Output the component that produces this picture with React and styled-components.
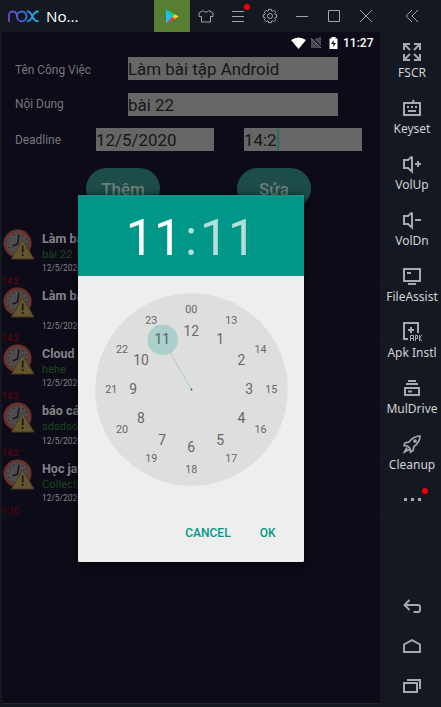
import React from "react";
import styled, { createGlobalStyle } from "styled-components";

const Global = createGlobalStyle`
  * { box-sizing: border-box; }
  body { margin: 0; background: #131821; overflow: hidden; }
  button { border: 0; padding: 0; margin: 0; background: none; font: inherit; color: inherit; }
`;

const Window = styled.div`
  display: grid;
  grid-template-columns: 380px 61px;
  grid-template-rows: 32px 675px;
  width: 441px;
  height: 707px;
  background: #131821;
  font-family: Roboto, sans-serif;
`;

const TitleBar = styled.header`
  grid-column: 1 / 3;
  display: flex;
  align-items: center;
  height: 32px;
  padding-left: 8px;
`;

const AppTitle = styled.div`
  flex: none;
  width: 115px;
  padding-left: 7px;
  font: 15.2px/32px "Open Sans", "Noto Sans", sans-serif;
  color: #fff;
`;

const BarButton = styled.button`
  position: relative;
  display: grid;
  place-items: center;
  flex: none;
  width: ${(p) => p.$w || 32}px;
  height: 32px;
  background: ${(p) => (p.$active ? "#587e33" : "transparent")};
`;

const RedDot = styled.span`
  position: absolute;
  width: 6px;
  height: 6px;
  border-radius: 50%;
  background: #f90000;
  top: ${(p) => p.$top}px;
  left: ${(p) => p.$left}px;
`;

const Phone = styled.main`
  position: relative;
  margin-left: 2px;
  width: 378px;
  height: 672px;
  background: #0c0b17;
  border-bottom: 1px solid #29242b;
  overflow: hidden;
`;

const StatusBar = styled.div`
  display: flex;
  align-items: center;
  justify-content: flex-end;
  height: 22px;
  padding-right: 5px;
  font-size: 12px;
  font-weight: 500;
  color: #fff;
  svg { display: block; }
`;

const Clock = styled.span`
  width: 32px;
  margin-left: 5px;
  white-space: nowrap;
`;

const Form = styled.div`
  padding: 3px 0 0 13px;
  display: grid;
  row-gap: 12.7px;
`;

const FormRow = styled.label`
  display: flex;
  height: 23px;
  align-items: center;
`;

const Label = styled.span`
  width: ${(p) => p.$w}px;
  font-size: 11.9px;
  color: #77767b;
  white-space: nowrap;
  padding-top: ${(p) => p.$drop ?? 2}px;
`;

const Field = styled.span`
  display: flex;
  align-items: center;
  width: ${(p) => p.$w}px;
  margin-right: 30px;
  height: 23px;
  padding-top: 1px;
  background: #666;
  color: #161616;
  font-size: 16.9px;
  white-space: nowrap;
`;

const Caret = styled.i`
  flex: none;
  width: 2px;
  height: 22px;
  margin-top: -1px;
  background: #286d64;
`;

const Buttons = styled.div`
  display: flex;
  gap: 77px;
  padding: 17px 0 0 84px;
`;

const Pill = styled.button`
  width: 74px;
  height: 41px;
  border-radius: 21px;
  background: #1d4d49;
  color: #6f7d79;
  font-size: 17px;
  font-weight: 500;
`;

const List = styled.ul`
  list-style: none;
  margin: 19px 0 0;
  padding: 0;
`;

const Task = styled.li`
  display: grid;
  grid-template-columns: 40px 1fr;
  height: 57.5px;
  border-bottom: 1px solid #0f0e1a;
  white-space: nowrap;
`;

const TaskAside = styled.div`
  display: flex;
  flex-direction: column;
`;

const DueTime = styled.span`
  font-size: 8.7px;
  line-height: 10px;
  margin-top: 14.5px;
  color: #760009;
`;

const TaskBody = styled.div`
  display: flex;
  flex-direction: column;
  padding-top: 2.2px;
`;

const TaskName = styled.b`
  font-size: 12.5px;
  line-height: 16px;
  color: #858489;
`;

const TaskNote = styled.span`
  font-size: 11.2px;
  line-height: 16px;
  height: 16.5px;
  color: #1d461f;
`;

const TaskDate = styled.span`
  font-size: 8.4px;
  line-height: 11px;
  color: #85848a;
`;

const Dialog = styled.section`
  position: absolute;
  left: 76px;
  top: 163px;
  width: 226px;
  height: 366.5px;
  border-radius: 1.5px;
  overflow: hidden;
  background: #eee;
  box-shadow: 0 2px 9px #05050b;
`;

const TimeHeader = styled.div`
  display: flex;
  justify-content: center;
  align-items: center;
  height: 81px;
  padding-top: 4px;
  background: #009788;
  color: #b2dfdb;
  font-size: 50px;
  line-height: 58px;
`;

const Digits = styled.span`
  color: ${(p) => (p.$on ? "#fff" : "#b2dfdb")};
`;

const Colon = styled.span`
  width: 18px;
  text-align: center;
`;

const Dial = styled.svg`
  display: block;
  margin: 17px 0 0 16.5px;
  font-family: Roboto, sans-serif;
`;

const Actions = styled.div`
  display: flex;
  justify-content: flex-end;
  gap: 29px;
  padding: 39px 28.5px 0 0;
  color: #009788;
  font-size: 12px;
  letter-spacing: -0.15px;
  line-height: 16px;
  font-weight: 500;
`;

const Sidebar = styled.aside`
  display: flex;
  flex-direction: column;
  height: 675px;
  padding-left: 3px;
  color: #a7a9ad;
`;

const Tool = styled.button`
  display: flex;
  flex-direction: column;
  align-items: center;
  height: 56px;
  padding-top: 8px;
  svg { flex: none; }
`;

const ToolLabel = styled.span`
  margin-top: 1px;
  font: 12px/16px "Noto Sans", sans-serif;
  color: #d2d3d5;
  white-space: nowrap;
`;

const More = styled.button`
  position: relative;
  display: flex;
  justify-content: center;
  gap: 4px;
  height: 40px;
  padding-top: 18px;
`;

const Speck = styled.i`
  width: 3px;
  height: 3px;
  background: #a7a9ad;
`;

const NavKeys = styled.div`
  display: flex;
  flex-direction: column;
  align-items: center;
  margin-top: auto;
  padding-bottom: 1px;
`;

const NavKey = styled.button`
  display: grid;
  place-items: center;
  height: 40px;
`;

const NoxLogo = () => (
  <svg width="31" height="13" viewBox="0 0 31 13" fill="none" strokeWidth="1.800" strokeLinecap="round">
    <defs>
      <linearGradient id="nox" gradientUnits="userSpaceOnUse" x1="0" y1="0" x2="31" y2="0">
        <stop offset="0" stopColor="#7a3fd0" />
        <stop offset=".5" stopColor="#3f69dd" />
        <stop offset="1" stopColor="#17c4e6" />
      </linearGradient>
    </defs>
    <g stroke="url(#nox)">
      <path d="M1 11.300V5.200C1 2.600 2.600 1.500 4.700 1.500S8.600 3 9 6" />
      <ellipse cx="13.700" cy="6.400" rx="4.700" ry="4.900" />
      <path d="M19.500 1.500C25 1.500 23.500 11.300 29.800 11.300M29.800 1.500C23.500 1.500 25 11.300 19.500 11.300" />
    </g>
  </svg>
);

const PlayLogo = () => (
  <svg width="14" height="15" viewBox="0 0 14 15">
    <path d="M1 0.500V14.500L7.500 7.500Z" fill="#12c5f4" />
    <path d="M1 .5L10 5.200 7.500 7.500Z" fill="#10d884" />
    <path d="M1 14.500L10 9.800 7.500 7.500Z" fill="#ef3b55" />
    <path d="M10 5.200L13.600 7.500 10 9.800 7.500 7.500Z" fill="#ffd21c" />
  </svg>
);

const BarIcon = ({ d }) => (
  <svg width="16" height="16" viewBox="0 0 16 16" fill="none" stroke="#a2a5aa">
    <path d={d} />
  </svg>
);

const gearPath = () => {
  const points = [];
  for (let i = 0; i < 8; i++) {
    [[-0.32, 5.2], [-0.2, 6.8], [0.2, 6.8], [0.32, 5.2]].forEach(([o, r]) => {
      const a = (i * Math.PI) / 4 + o;
      points.push(`${(8 + r * Math.sin(a)).toFixed(2)} ${(8 - r * Math.cos(a)).toFixed(2)}`);
    });
  }
  return `M${points.join("L")}ZM5.500 8a2.500 2.500 0 1 0 5 0a2.500 2.500 0 1 0-5 0`;
};

const toolIcons = {
  fscr: (
    <path d="M1 7V1h6M1.500 1.500l5.500 5.500M11 1h6v6M16.500 1.500L11 7M1 11v6h6M1.500 16.500L7 11M17 11v6h-6M16.500 16.500L11 11" />
  ),
  keyset: <path d="M1 4h16v12H1ZM9 4l2-3M4 8h2M8 8h2M12 8h2M5 12h8" />,
  volUp: <path d="M9 1.500V16.500L5 13H1V5h4L9 1.500M12 9h6M15 6v6" />,
  volDn: <path d="M9 1.500V16.500L5 13H1V5h4L9 1.500M12 9h6" />,
  file: <path d="M1 2h16v12H1ZM5 17h8M4 6h4" />,
  drive: <path d="M5 2h8M3 5h12M2 9h14v7H2ZM5 12.500h4" />,
  rocket: (
    <>
      <path d="M17 1C12 1 9 3 6 7L2 8l-1 2.500 3.500.5 2.500 2.500.5 3.500 2.500-1.500 1-4c4-3 6-6 6-10.500ZM4 12.500L1.500 17 6 14.500" />
      <circle cx="12" cy="6" r="1" />
    </>
  ),
};

const ToolIcon = ({ name }) =>
  name === "apk" ? (
    <svg width="20" height="24" viewBox="-1 0 20 24" fill="none" stroke="currentColor" strokeWidth="2">
      <path d="M5 19H1V3h14v10M8 7v6M5 10h6" />
      <path strokeWidth="1" d="M7.500 21v-5.500h3V21M7.500 18.500h3M12.500 21v-5.500h2v3h-2M16.500 15v6M19 15l-2.500 3 2.500 3" />
    </svg>
  ) : (
    <svg width="18" height="24" viewBox="0 -3 18 24" fill="none" stroke="currentColor" strokeWidth={name === "rocket" ? 1.7 : 2}>
      {toolIcons[name]}
    </svg>
  );

const tools = [
  { icon: "fscr", label: "FSCR" },
  { icon: "keyset", label: "Keyset" },
  { icon: "volUp", label: "VolUp" },
  { icon: "volDn", label: "VolDn" },
  { icon: "file", label: "FileAssist" },
  { icon: "apk", label: "Apk Instl" },
  { icon: "drive", label: "MulDrive" },
  { icon: "rocket", label: "Cleanup" },
];

const AlarmIcon = () => (
  <svg width="33" height="33" viewBox="0 0 33 33">
    <circle cx="15.500" cy="15.500" r="12.700" fill="#4f4c4d" stroke="#622823" strokeWidth="3" />
    <circle cx="15.500" cy="15.500" r="12.600" fill="none" stroke="#744840" strokeWidth=".6" />
    <circle cx="15.500" cy="15.500" r="9.300" fill="none" stroke="#201f24" strokeWidth="1.300" strokeDasharray="1 3.870" />
    <path d="M17 7l-1.500 9-5 2" fill="none" stroke="#141418" strokeWidth="1.500" />
    <path d="M20.500 11.500L9.500 31H32Z" fill="#65552f" stroke="#443920" />
    <path d="M20.700 17.500v7M20.700 26v2" stroke="#1a1713" strokeWidth="1.700" />
  </svg>
);

const tasks = [
  { name: "Làm bài", note: "bài 22", due: "14:2" },
  { name: "Làm bài", note: "", due: "14:2" },
  { name: "Cloud", note: "hehe", due: "14:2" },
  { name: "báo cáo", note: "sdsdsd", due: "14:2" },
  { name: "Học java", note: "Collection", due: "1:10" },
];

const polar = (hour, r) => {
  const a = (hour * Math.PI) / 6;
  return [96.5 + r * Math.sin(a), 96.5 - r * Math.cos(a)];
};

const hours = Array.from({ length: 12 }, (_, i) => i);

function TimeDial() {
  const [hx, hy] = polar(11, 57.5);
  return (
    <Dial width="193" height="193" viewBox="0 0 193 193">
      <circle cx="96.500" cy="96.500" r="96.300" fill="#dedede" />
      <path d={`M96.500 96.500L${hx} ${hy}`} stroke="#a8d0cb" />
      <circle cx={hx} cy={hy} r="15.200" fill="#abcfcb" />
      <circle cx="96.500" cy="96.500" r=".9" fill="#34625f" />
      {hours.map((h) => {
        const [x, y] = polar(h, 58);
        const [ox, oy] = polar(h, 80);
        return (
          <g key={h} textAnchor="middle" fill="#666">
            <text x={x - 0.3} y={y + 4.8} fontSize="13.900" fill={h === 11 ? "#4c6361" : "#666"}>{h || 12}</text>
            <text x={ox - 0.3} y={oy + 3.7} fontSize="10.700">{h ? h + 12 : "00"}</text>
          </g>
        );
      })}
    </Dial>
  );
}

export default function App() {
  return (
    <>
      <Global />
      <Window>
        <TitleBar>
          <NoxLogo />
          <AppTitle>No...</AppTitle>
          <BarButton $w={36} $active><PlayLogo /></BarButton>
          <BarButton><BarIcon d="M5 2.500L1 5v3.500h2.500V14h9V8.500H15V5l-4-2.500c-1 2-5 2-6 0Z" /></BarButton>
          <BarButton>
            <BarIcon d="M2 3.500h12M2 8.500h12M2 13.500h12" />
            <RedDot $top={4} $left={22} />
          </BarButton>
          <BarButton><BarIcon d={gearPath()} /></BarButton>
          <BarButton><BarIcon d="M2 8.500h12" /></BarButton>
          <BarButton><BarIcon d="M2.500 2.500h11v11h-11Z" /></BarButton>
          <BarButton><BarIcon d="M2 2l12 12M14 2L2 14" /></BarButton>
          <BarButton $w={59}><BarIcon d="M8 2L2 8l6 6M14 2L8 8l6 6" /></BarButton>
        </TitleBar>

        <Phone>
          <StatusBar>
            <svg width="48" height="14" viewBox="-1 0 48 14">
              <path d="M0 4Q7.500-1 15 4L7.500 13Z" fill="#fff" />
              <path d="M20 2l10 10H20ZM23 3l7-2v9Z" fill="#4a4953" />
              <path d="M20 2l10 10" stroke="#77757d" />
              <path d="M38.500 2.500h2V1h4v1.500h2V13h-8Z" fill="#fff" />
              <path d="M43 4l-3 4h2.500l-.5 3 3-4h-2.500Z" fill="#0c0b17" />
            </svg>
            <Clock>11:27</Clock>
          </StatusBar>

          <Form>
            <FormRow><Label $w={113}>Tên Công Việc</Label><Field $w={210}>Làm bài tập Android</Field></FormRow>
            <FormRow><Label $w={113} $drop={0}>Nội Dung</Label><Field $w={210}>bài 22</Field></FormRow>
            <FormRow>
              <Label $w={81} $drop={0}>Deadline</Label>
              <Field $w={118}>12/5/2020</Field>
              <Field $w={118}>14:2<Caret /></Field>
            </FormRow>
          </Form>
          <Buttons><Pill>Thêm</Pill><Pill>Sửa</Pill></Buttons>

          <List>
            {tasks.map((t, i) => (
              <Task key={i}>
                <TaskAside><AlarmIcon /><DueTime>{t.due}</DueTime></TaskAside>
                <TaskBody>
                  <TaskName>{t.name}</TaskName>
                  <TaskNote>{t.note}</TaskNote>
                  <TaskDate>12/5/2020</TaskDate>
                </TaskBody>
              </Task>
            ))}
          </List>

          <Dialog>
            <TimeHeader>
              <Digits $on>11</Digits><Colon>:</Colon><Digits>11</Digits>
            </TimeHeader>
            <TimeDial />
            <Actions><button>CANCEL</button><button>OK</button></Actions>
          </Dialog>
        </Phone>

        <Sidebar>
          {tools.map((t) => (
            <Tool key={t.icon}><ToolIcon name={t.icon} /><ToolLabel>{t.label}</ToolLabel></Tool>
          ))}
          <More><Speck /><Speck /><Speck /><RedDot $top={8} $left={39} /></More>
          <NavKeys>
            <NavKey>
              <svg width="18" height="14" viewBox="0 0 18 14" fill="none" stroke="currentColor" strokeWidth="1.900">
                <path d="M6.500 1L1.500 6l5 5M1.500 6H15q2 0 2 2v3q0 2-2 2h-4.500" />
              </svg>
            </NavKey>
            <NavKey>
              <svg width="18" height="14" viewBox="0 0 18 14" fill="none" stroke="currentColor" strokeWidth="1.900">
                <path d="M1 13V5.500L9 1.200l8 4.300V13Z" />
              </svg>
            </NavKey>
            <NavKey>
              <svg width="18" height="14" viewBox="0 0 18 14" fill="none" stroke="currentColor" strokeWidth="2">
                <path d="M1 4h13v9H1ZM4 1h13v9" />
              </svg>
            </NavKey>
          </NavKeys>
        </Sidebar>
      </Window>
    </>
  );
}
